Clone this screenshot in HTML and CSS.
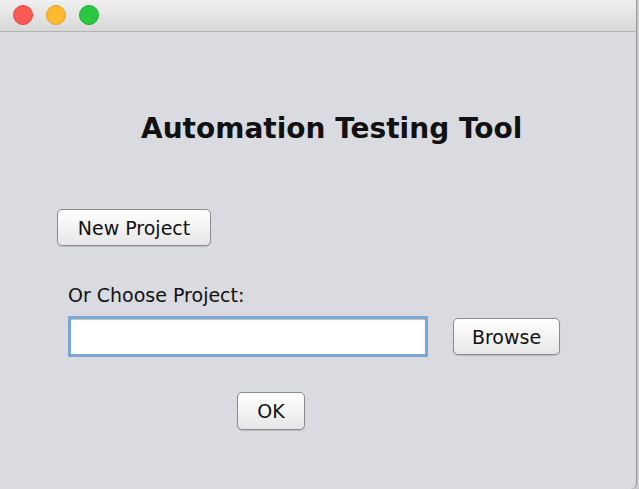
FILE: index.html
```html
<!DOCTYPE html>
<html lang="en">
<head>
    <meta charset="UTF-8">
    <meta name="viewport" content="width=device-width, initial-scale=1.0">
    <title>Automation Testing Tool</title>
    <link rel="stylesheet" href="styles.css">
</head>
<body>
    <div class="window">
        <div class="titlebar">
            <span class="light red"></span>
            <span class="light yellow"></span>
            <span class="light green"></span>
        </div>
        <div class="content">
            <h1 class="title">Automation Testing Tool</h1>
            <button type="button" class="btn new-project">New Project</button>
            <label class="choose-label" for="project">Or Choose Project:</label>
            <div class="choose-row">
                <input type="text" id="project" class="project-input">
                <button type="button" class="btn browse">Browse</button>
            </div>
            <button type="button" class="btn ok">OK</button>
        </div>
    </div>
</body>
</html>
```

FILE: styles.css
```css
html, body { margin: 0; padding: 0; background: #c9c9c9; }
body { font-family: "DejaVu Sans", "Liberation Sans", sans-serif; width: 639px; height: 489px; overflow: hidden; }
.window { width: 636px; height: 489px; background: #d9dbe0; border-right: 1px solid #9a9a9a; border-radius: 0 0 6px 0; display: flex; flex-direction: column; }
.titlebar { height: 32px; box-sizing: border-box; border-bottom: 1px solid #b4b4b4; background: linear-gradient(#efefef, #e4e4e4 50%, #d8d8d8); display: flex; align-items: center; gap: 13px; padding: 0 0 1px 13px; }
.light { width: 20px; height: 20px; border-radius: 50%; display: block; box-sizing: border-box; }
.red { background: #fc5b55; border: 1px solid #e5453f; }
.yellow { background: #fcbb2f; border: 1px solid #e0a024; }
.green { background: #2ac741; border: 1px solid #1eab2f; }
.content { display: flex; flex-direction: column; align-items: flex-start; }
.title { font-size: 28px; font-weight: bold; margin: 81px 0 0 141px; line-height: 32px; color: #111; }
.btn { font-family: inherit; font-size: 19px; color: #111; background: linear-gradient(#ffffff, #f3f3f3 50%, #e6e6e6); border: 1px solid #8c8c8c; border-radius: 5px; box-shadow: 0 1px 1px rgba(0,0,0,0.15); padding: 0; cursor: pointer; }
.new-project { margin: 64px 0 0 57px; width: 154px; height: 37px; }
.choose-label { font-size: 19px; color: #111; margin: 38px 0 0 68px; line-height: 22px; }
.choose-row { display: flex; align-items: center; gap: 25px; margin: 10px 0 0 68px; }
.project-input { width: 360px; height: 41px; box-sizing: border-box; border: 3px solid #7ba7d7; background: #fff; box-shadow: inset 0 1px 1px rgba(0,0,0,0.25); margin: 0; padding: 0 4px; font-family: inherit; font-size: 16px; }
.browse { width: 107px; height: 37px; }
.ok { margin: 35px 0 0 237px; width: 68px; height: 38px; }
```
